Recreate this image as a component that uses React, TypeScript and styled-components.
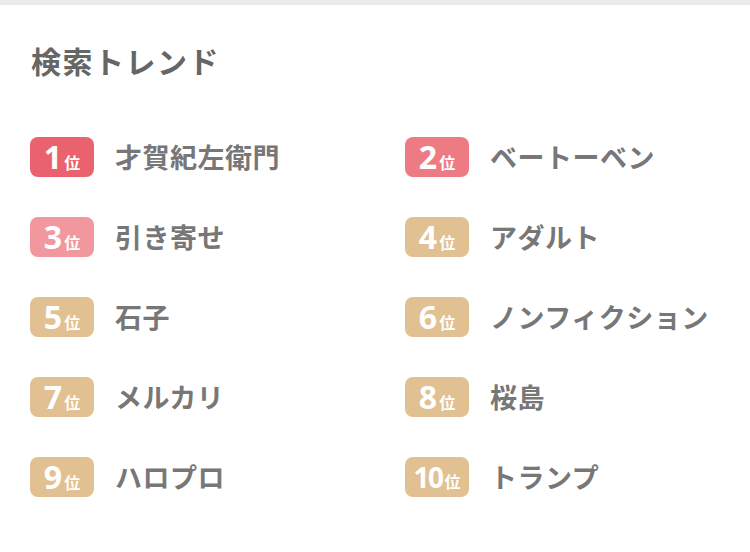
import React from 'react';
import styled, {createGlobalStyle} from 'styled-components';

const GlobalStyle = createGlobalStyle`
  html, body {
    margin: 0;
    padding: 0;
    background: #fff;
  }
  body {
    font-family: "Noto Sans CJK JP", "Noto Sans", sans-serif;
  }
`;

interface TrendItem {
  rank: number;
  word: string;
}

const trends: TrendItem[] = [
  {rank: 1, word: '才賀紀左衛門'},
  {rank: 2, word: 'ベートーベン'},
  {rank: 3, word: '引き寄せ'},
  {rank: 4, word: 'アダルト'},
  {rank: 5, word: '石子'},
  {rank: 6, word: 'ノンフィクション'},
  {rank: 7, word: 'メルカリ'},
  {rank: 8, word: '桜島'},
  {rank: 9, word: 'ハロプロ'},
  {rank: 10, word: 'トランプ'},
];

const badgeColor = (rank: number) => {
  if (rank === 1) return '#e9626d';
  if (rank === 2) return '#ed7b84';
  if (rank === 3) return '#f1979e';
  return '#e1c192';
};

export default function App() {
  return (
    <>
      <GlobalStyle />
      <TopBar />
      <Section>
        <Title>検索トレンド</Title>
        <List>
          {trends.map((item) => (
            <Row key={item.rank}>
              <Badge $bg={badgeColor(item.rank)}>
                <RankNum $small={item.rank >= 10}>{item.rank}</RankNum>
                <RankUnit>位</RankUnit>
              </Badge>
              <Word>{item.word}</Word>
            </Row>
          ))}
        </List>
      </Section>
    </>
  );
}

const TopBar = styled.div`
  height: 5px;
  background: #ebebeb;
`;

const Section = styled.section`
  padding: 35px 0 0 30px;
`;

const Title = styled.h2`
  margin: 0 0 0 1px;
  font-size: 30px;
  line-height: 40px;
  font-weight: 700;
  color: #666;
  letter-spacing: 1.5px;
`;

const List = styled.div`
  display: grid;
  grid-template-columns: 375px 345px;
  row-gap: 40px;
  margin-top: 57px;
`;

const Row = styled.div`
  display: flex;
  align-items: center;
  gap: 21px;
  height: 40px;
`;

const Badge = styled.div<{$bg: string}>`
  display: flex;
  align-items: baseline;
  justify-content: center;
  flex: 0 0 64px;
  height: 40px;
  border-radius: 8px;
  background: ${(p) => p.$bg};
  color: #fff;
  padding-top: 2px;
  box-sizing: border-box;
`;

const RankNum = styled.span<{$small: boolean}>`
  font-family: "Noto Sans", "Open Sans", sans-serif;
  font-weight: 700;
  font-size: ${(p) => (p.$small ? '28px' : '32px')};
  letter-spacing: ${(p) => (p.$small ? '-1.5px' : '0')};
  line-height: 36px;
`;

const RankUnit = styled.span`
  font-size: 16px;
  font-weight: 700;
  margin-left: 2px;
  line-height: 36px;
`;

const Word = styled.span`
  font-size: 27px;
  font-weight: 700;
  color: #777;
  letter-spacing: 0.5px;
  line-height: 40px;
`;
